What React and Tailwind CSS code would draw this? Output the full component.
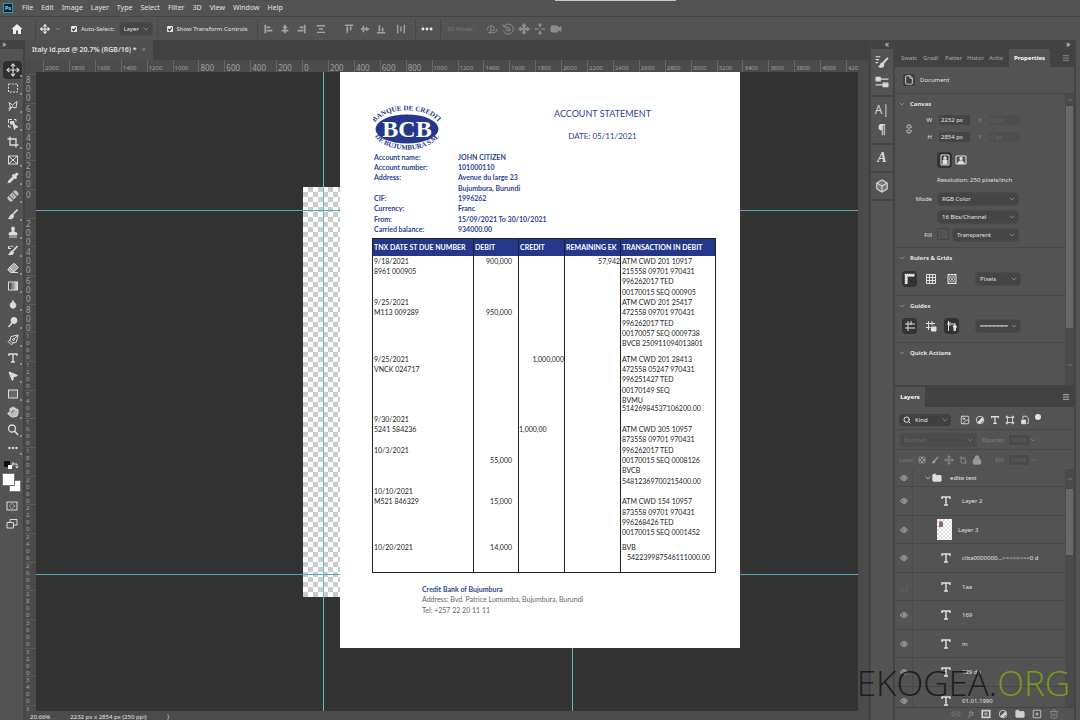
import {
  Box,
  ChevronDown,
  ChevronUp,
  Droplet,
  Ellipsis,
  Eraser,
  Eye,
  File,
  Folder,
  Hand,
  Image,
  Link2,
  Lock,
  Menu,
  MousePointer2,
  Move,
  PenTool,
  Pipette,
  Search,
  Stamp,
  Trash2,
  Video,
} from "lucide-react";

const menus = ["File", "Edit", "Image", "Layer", "Type", "Select", "Filter", "3D", "View", "Window", "Help"];

// 24x24 drawings that the icon package does not have
const shapes = {
  home: <path d="M12 2L1 12h3v10h6v-7h4v7h6V12h3z" fill="currentColor" strokeWidth="0" />,
  marquee: <rect x="3" y="4" width="18" height="16" strokeDasharray="4 2.5" />,
  lasso: <path d="M4 5l7 5 9-7-2 13-7-2-5 4c-3 1-3-3 0-3l5-1M4 5l3 10M7 18l-3 4" />,
  objectSelect: (
    <>
      <path d="M3 10V3h7M14 3h4v4M3 14v4h5" />
      <path d="M7 7h7v5H7z" fill="currentColor" />
      <path d="M12 11l10 7-5 1-2 4z" fill="currentColor" />
    </>
  ),
  crop: <path d="M6 1v17h17M1 6h17v17" strokeWidth="2.6" />,
  frame: <path d="M3 4h18v16H3zM3 4l18 16M21 4L3 20" />,
  healing: (
    <g transform="rotate(-45 12 12)">
      <rect x="0" y="6" width="24" height="12" rx="4" fill="#c4c4c4" strokeWidth="0" />
      <path d="M7 6v12M17 6v12M11 10h2M11 14h2" stroke="#555555" />
    </g>
  ),
  historyBrush: (
    <>
      <path d="M21 4L11 15" strokeWidth="3.4" />
      <path d="M10 14c-3 0-3 4-7 7 6 1 10 0 10-4z" fill="currentColor" />
      <path d="M3 9c1-5 7-6 10-3M3 4v5h5" />
    </>
  ),
  gradient: (
    <>
      <defs>
        <linearGradient id="toolGradient">
          <stop offset="0" stopColor="#333333" />
          <stop offset="1" stopColor="#e6e6e6" />
        </linearGradient>
      </defs>
      <rect x="3" y="4" width="18" height="16" fill="url(#toolGradient)" />
    </>
  ),
  dodge: (
    <>
      <circle cx="14" cy="9" r="6" fill="currentColor" />
      <path d="M10 14l-7 8" strokeWidth="3" />
    </>
  ),
  type: <path d="M4 8V4h16v4M12 4v16M8 20h8" strokeWidth="2.8" />,
  rect: <rect x="3" y="4" width="18" height="16" fill="#696969" />,
  zoomTool: (
    <>
      <circle cx="10" cy="9" r="7" strokeWidth="2.6" />
      <path d="M15 14l7 8" strokeWidth="3.4" />
    </>
  ),
  quickMask: (
    <>
      <rect x="2" y="4" width="20" height="16" />
      <circle cx="12" cy="12" r="4.5" strokeDasharray="2 2" />
    </>
  ),
  screenMode: (
    <>
      <path d="M8 3h14v11H8z" />
      <path d="M2 9h13v11H2z" fill="#535353" />
    </>
  ),
  alignLeft: <path d="M3 2v20M6 8h9M6 16h14" strokeWidth="4" />,
  alignCenter: <path d="M12 2v20M7 8h10M4 16h16" strokeWidth="4" />,
  alignRight: <path d="M21 2v20M9 8h9M4 16h14" strokeWidth="4" />,
  distribute: <path d="M2 4h20M7 12h10M2 20h20" strokeWidth="3.4" />,
  alignTop: <path d="M2 3h20M8 6v15M16 6v9" strokeWidth="4" />,
  alignMiddle: <path d="M2 12h20M8 4v16M16 7v10" strokeWidth="4" />,
  alignBottom: <path d="M2 21h20M8 3v15M16 9v9" strokeWidth="4" />,
  distributeH: <path d="M4 2v20M12 6v12M20 2v20" strokeWidth="3.4" />,
  orbit: (
    <>
      <path d="M3 14c-3-5 6-10 12-7M21 12c3 6-6 9-12 6M9 15v6l-6-3" />
      <circle cx="13" cy="11" r="4" />
    </>
  ),
  roll: (
    <>
      <path d="M4 7a10 10 0 1 1-1 8M2 3l2 5 5-1" />
      <circle cx="12" cy="12" r="4" />
      <path d="M12 12l5 4" />
    </>
  ),
  pan: <path d="M12 1l4 5h-3v5h5V8l5 4-5 4v-3h-5v5h3l-4 5-4-5h3v-5H6v3l-5-4 5-4v3h5V6H8z" fill="currentColor" />,
  slide: <path d="M12 2v7M12 15v7M2 12h7M15 12h7M9 5l3-3 3 3M9 19l3 3 3-3" strokeWidth="3" />,
  brushes: (
    <>
      <path d="M22 5L13 15" strokeWidth="3.4" />
      <path d="M12 14c-3 0-2 4-5 6 5 2 8 0 8-3z" fill="currentColor" />
      <path d="M1 3h8M1 8h6M1 13h4" />
    </>
  ),
  sliders: (
    <>
      <path d="M1 7h22M1 17h22" />
      <path d="M2 4h7v6H2zM14 14h8v6h-8z" fill="currentColor" />
    </>
  ),
  ruler: <path d="M4 22V4h18M4 5h17M5 4v17" strokeWidth="5" strokeDasharray="3 1" />,
  grid: <path d="M3 3h18v18H3zM9 3v18M15 3v18M3 9h18M3 15h18" />,
  pixelGrid: (
    <>
      <path d="M4 3h16v18H4z" />
      <path d="M4 3l16 18M20 3L4 21M12 5l6 7-6 7-6-7z" strokeWidth="1.400" />
    </>
  ),
  guides: <path d="M8 2v20M2 8h20M2 16h20M14 2v8" />,
  guidesLock: (
    <>
      <path d="M7 2v18M2 7h18M2 15h9M14 2v9" />
      <path d="M13 14h9v8h-9z" fill="currentColor" />
    </>
  ),
  guidesSmart: (
    <>
      <path d="M5 2v20M2 8h18M9 4L5 8l4 4" />
      <path d="M17 9l5 5h-3v7h-3v-7h-2z" fill="currentColor" />
    </>
  ),
  portrait: (
    <>
      <path d="M4 2h16v20H4z" />
      <circle cx="12" cy="8" r="2.5" fill="currentColor" />
      <path d="M8 12h8v8H8z" fill="currentColor" />
    </>
  ),
  landscape: (
    <>
      <path d="M2 4h20v16H2z" />
      <circle cx="12" cy="9" r="2.5" fill="currentColor" />
      <path d="M6 19c0-7 12-7 12 0z" fill="currentColor" />
    </>
  ),
  adjust: (
    <>
      <circle cx="12" cy="12" r="9" />
      <path d="M18 6A9 9 0 0 1 6 18z" fill="currentColor" />
    </>
  ),
  shape: <path d="M6 6h12v12H6zM3 3h4v4H3zM17 3h4v4h-4zM3 17h4v4H3zM17 17h4v4h-4z" />,
  smart: (
    <>
      <path d="M7 9V3h9l4 4v13h-4" />
      <path d="M4 12h9v9H4z" fill="currentColor" />
    </>
  ),
  checker: (
    <>
      <path d="M3 3h18v18H3z" />
      <path d="M9 3h6v6H9zM3 9h6v6H3zM15 9h6v6h-6zM9 15h6v6H9z" fill="currentColor" strokeWidth="0" />
    </>
  ),
  brush: (
    <>
      <path d="M21 3L11 14" strokeWidth="3.4" />
      <path d="M10 13c-4 0-3 5-7 8 6 1 10 0 10-5z" fill="currentColor" />
    </>
  ),
  artboard: <path d="M6 1v20h16M1 6h14l5 5v13M12 10l8-7" />,
  mask: (
    <>
      <path d="M3 4h18v16H3z" strokeWidth="4" />
      <circle cx="12" cy="12" r="3" />
    </>
  ),
  plus: <path d="M3 3h18v18H3zM12 8v8M8 12h8" />,
};

function Icon({ name, className = "size-3" }) {
  return (
    <svg viewBox="0 0 24 24" fill="none" stroke="currentColor" strokeWidth="2" className={className} aria-hidden="true">
      {shapes[name]}
    </svg>
  );
}

const tools = [
  ["Move", <Move className="size-3.5" />],
  ["Marquee", <Icon name="marquee" />],
  ["Lasso", <Icon name="lasso" />],
  ["Object select", <Icon name="objectSelect" />],
  ["Crop", <Icon name="crop" />],
  ["Frame", <Icon name="frame" />],
  ["Eyedropper", <Pipette className="size-3" fill="currentColor" />],
  ["Healing", <Icon name="healing" />],
  ["Brush", <Icon name="brush" />],
  ["Stamp", <Stamp className="size-3" fill="currentColor" />],
  ["History brush", <Icon name="historyBrush" />],
  ["Eraser", <Eraser className="size-3" fill="#aaaaaa" />],
  ["Gradient", <Icon name="gradient" />],
  ["Blur", <Droplet className="size-2.5" fill="currentColor" />],
  ["Dodge", <Icon name="dodge" />],
  ["Pen", <PenTool className="size-3 -scale-x-100" />],
  ["Type", <Icon name="type" />],
  ["Path select", <MousePointer2 className="size-3" fill="currentColor" />],
  ["Rectangle", <Icon name="rect" />],
  ["Hand", <Hand className="size-3" fill="#bbbbbb" />],
  ["Zoom", <Icon name="zoomTool" />],
  ["More tools", <Ellipsis className="size-3" fill="currentColor" strokeWidth={3} />],
];

const topRuler = Array.from({ length: 32 }, (_, i) => Math.abs(i * 200 - 2000));
const sideRuler = Array.from({ length: 23 }, (_, i) => Math.abs(i * 200 - 800));

const details = [
  ["Account name:", "JOHN CITIZEN"],
  ["Account number:", "101000110"],
  ["Address:", "Avenue du large 23"],
  ["", "Bujumbura, Burundi"],
  ["CIF:", "1996262"],
  ["Currency:", "Franc"],
  ["From:", "15/09/2021 To 30/10/2021"],
  ["Carried balance:", "934000.00"],
];

// number, debit, credit, remaining, text, row height
const lines = [
  ["9/18/2021", "900,000", "", "57,942", "ATM CWD 201 10917"],
  ["8961 000905", "", "", "", "215558 09701 970431"],
  ["", "", "", "", "996262017 TED"],
  ["", "", "", "", "00170015 SEQ 000905"],
  ["9/25/2021", "", "", "", "ATM CWD 201 25417"],
  ["M113 009289", "950,000", "", "", "472558 09701 970431"],
  ["", "", "", "", "996262017 TED"],
  ["", "", "", "", "00170057 SEQ 0009738"],
  ["", "", "", "", "BVCB 250911094013801", "h-[16px]"],
  ["9/25/2021", "", "1,000,000", "", "ATM CWD 201 28413"],
  ["VNCK 024717", "", "", "", "472558 05247 970431"],
  ["", "", "", "", "996251427 TED"],
  ["", "", "", "", "00170149 SEQ"],
  ["", "", "", "", "BVMU", "h-[8px]"],
  ["", "", "", "", "51426984537106200.00"],
  ["9/30/2021", "", "", "", ""],
  ["5241 584236", "", "1,000,00", "", "ATM CWD 305 10957"],
  ["", "", "", "", "873558 09701 970431"],
  ["10/3/2021", "", "", "", "996262017 TED"],
  ["", "55,000", "", "", "00170015 SEQ 0008126"],
  ["", "", "", "", "BVCB"],
  ["", "", "", "", "54812369700215400.00"],
  ["10/10/2021", "", "", "", ""],
  ["M521 846329", "15,000", "", "", "ATM CWD 154 10957"],
  ["", "", "", "", "873558 09701 970431"],
  ["", "", "", "", "996268426 TED"],
  ["", "", "", "", "00170015 SEQ 0001452", "h-[15px]"],
  ["10/20/2021", "14,000", "", "", "BVB"],
  ["", "", "", "", "542239987546111000.00", "h-[21px]"],
];

const layers = [
  { name: "Layer 2", visible: true },
  { name: "Layer 3", visible: true, thumb: true },
  { name: "ciita0000000...<<<<<<<<0 d", visible: true },
  { name: "1aa", visible: false },
  { name: "169", visible: true },
  { name: "m", visible: true },
  { name: "129 da", visible: true },
  { name: "01.01.1990", visible: true },
];

function Divider() {
  return <span className="h-5 w-px bg-[#464646]" />;
}

function Select({ label, value, className = "", dim }) {
  return (
    <span className={`relative flex items-center rounded-sm border border-[#4a4a4a] bg-[#454545] ${dim ? "opacity-50" : ""} ${className}`}>
      <select aria-label={label} className="w-full appearance-none bg-transparent pl-1 leading-3 outline-none">
        <option>{value}</option>
      </select>
      <ChevronDown className="pointer-events-none absolute right-0.5 size-2 text-[#a0a0a0]" />
    </span>
  );
}

function Check({ label }) {
  return (
    <label className="flex items-center gap-1">
      <span className="relative flex size-1.5">
        <input type="checkbox" defaultChecked className="size-1.5 appearance-none rounded-[1px] bg-[#e8e8e8]" />
        <svg viewBox="0 0 8 8" className="pointer-events-none absolute inset-0 size-1.5" fill="none" stroke="#333333" strokeWidth="1.6">
          <path d="M1.5 4l2 2 3-4" />
        </svg>
      </span>
      {label}
    </label>
  );
}

function MenuBar() {
  return (
    <header className="relative flex h-[17px] shrink-0 items-center border-b border-[#444444] pl-[3px] text-[7px]">
      <span className="flex size-[10px] items-center justify-center border border-[#2e9c9c] bg-[#0b1e33] text-[6px] font-bold leading-none text-[#7fd0ee]">
        Ps
      </span>
      <nav className="flex gap-2 pl-[9px]">
        {menus.map((m) => (
          <button key={m}>{m}</button>
        ))}
      </nav>
      <span className="absolute left-[555px] top-0 h-px w-[121px] bg-[#c6cbc8]" />
    </header>
  );
}

function OptionsBar() {
  return (
    <div className="flex h-[23px] shrink-0 items-center gap-1 pl-[11px]">
      <button aria-label="Home" className="text-[#eeeeee]"><Icon name="home" /></button>
      <span className="w-1" />
      <Divider />
      <Move className="size-2.5" strokeWidth={3} />
      <ChevronDown className="size-2 text-[#9a9a9a]" />
      <span className="w-px" />
      <Check label="Auto-Select:" />
      <Select label="Auto-select target" value="Layer" className="w-[34px]" />
      <Divider />
      <span className="w-px" />
      <Check label="Show Transform Controls" />
      <span className="w-px" />
      <Divider />
      <div className="flex items-center gap-1.5 pl-0.5 text-[#a3a3a3]">
        <Icon name="alignLeft" className="size-2.5" />
        <Icon name="alignCenter" className="size-2.5" />
        <Icon name="alignRight" className="size-2.5" />
        <Icon name="distribute" className="ml-1 mr-3 size-2.5" />
        <Icon name="alignTop" className="size-2.5" />
        <Icon name="alignMiddle" className="size-2.5" />
        <Icon name="alignBottom" className="size-2.5" />
        <Icon name="distributeH" className="ml-1 size-2.5" />
      </div>
      <span className="w-px" />
      <Divider />
      <button aria-label="More options" className="mr-0.5 text-[#eeeeee]">
        <Ellipsis className="size-3.5" fill="currentColor" strokeWidth={3} />
      </button>
      <Divider />
      <span className="pl-0.5 text-[#7b7b7b]">3D Mode:</span>
      <div className="flex gap-1 pl-2 text-[#8c8c8c]">
        <Icon name="orbit" />
        <Icon name="roll" />
        <Icon name="pan" />
        <Icon name="slide" />
        <Video className="size-3" fill="currentColor" />
      </div>
    </div>
  );
}

function Toolbar() {
  return (
    <aside className="flex w-[25px] shrink-0 flex-col border-r-2 border-[#444444] text-[#dcdcdc]">
      <div className="h-[9px] bg-[#424242] pl-0.5 text-[8px] leading-[7px]">»</div>
      <div className="mt-3 flex flex-col">
        {tools.map(([name, icon], i) => (
          <button
            key={name}
            aria-label={name}
            className={`relative ml-[3px] flex h-[18px] w-[19px] items-center justify-center ${i === 0 ? "rounded-sm bg-[#2f2f2f]" : ""}`}
          >
            {icon}
            <span className="absolute bottom-0.5 right-0 size-0.5 bg-[#8e8e8e]" />
          </button>
        ))}
      </div>
      <div className="mt-1 flex justify-between px-1">
        <span className="relative size-1.5 bg-[#111111]">
          <span className="absolute left-1 top-1 size-1 bg-white" />
        </span>
        <svg viewBox="0 0 8 8" className="size-2" fill="none" stroke="currentColor">
          <path d="M1 3h5v4M2.5 1L1 3l1.500 2M4.500 5.500L6 7l1.500-1.500" />
        </svg>
      </div>
      <div className="relative mt-1 h-6">
        <span className="absolute left-[9px] top-[7px] size-[12px] border border-[#777777] bg-white" />
        <span className="absolute left-[2px] top-0 size-[13px] border border-[#777777] bg-white" />
      </div>
      <button aria-label="Quick mask" className="mx-auto flex h-[18px] items-center"><Icon name="quickMask" /></button>
      <button aria-label="Screen mode" className="mx-auto flex h-[18px] items-center"><Icon name="screenMode" /></button>
    </aside>
  );
}

function BankLogo() {
  return (
    <svg viewBox="0 0 68 48" className="ml-px h-[48px] w-[68px]" fill="#24378a" fontFamily="Liberation Serif, serif" fontWeight="bold">
      <path id="arcTop" d="M2 18C13 1 55 1 66 18" fill="none" />
      <path id="arcBottom" d="M1 30C12 49.500 56 49.500 67 30" fill="none" />
      <ellipse cx="34" cy="24" rx="31.500" ry="14.500" />
      <text fontSize="7" textAnchor="middle">
        <textPath href="#arcTop" startOffset="50%">BANQUE DE CREDIT</textPath>
      </text>
      <text fontSize="7" textAnchor="middle">
        <textPath href="#arcBottom" startOffset="50%">DE BUJUMBURA S.M.</textPath>
      </text>
      <text x="34" y="32" fontSize="24" textAnchor="middle" fill="#ffffff">BCB</text>
    </svg>
  );
}

function Statement() {
  return (
    <article className="absolute left-[304px] top-0 flex w-[400px] flex-col bg-white pb-[33px] pl-[32px] pr-[24px] pt-[33px] font-['Lato',sans-serif] text-[7px] leading-[10px] text-[#222222]">
      <div className="flex items-start justify-between text-[#2b3f92]">
        <BankLogo />
        <div className="mr-[65px] pt-px text-center">
          <h1 className="text-[9px] leading-4">ACCOUNT STATEMENT</h1>
          <p className="mt-1.5 text-[8px] leading-4">DATE: 05/11/2021</p>
        </div>
      </div>
      <dl className="-mt-px pl-0.5 font-bold text-[#2b3f92]">
        {details.map(([k, v]) => (
          <div key={v} className="flex h-[10px] nth-[3n]:h-[11px]">
            <dt className="w-[84px]">{k}</dt>
            <dd>{v}</dd>
          </div>
        ))}
      </dl>
      <table className="mt-1 w-full table-fixed border-collapse border border-[#222222]">
        <colgroup>
          <col className="w-[101px]" />
          <col className="w-[45px]" />
          <col className="w-[46px]" />
          <col className="w-[56px]" />
          <col />
        </colgroup>
        <thead>
          <tr className="h-[17px] whitespace-nowrap bg-[#24378a] text-left text-white">
            {["TNX DATE ST DUE NUMBER", "DEBIT", "CREDIT", "REMAINING EK", "TRANSACTION IN DEBIT"].map((h) => (
              <th key={h} className="border-x border-[#222222] p-0 pl-px">{h}</th>
            ))}
          </tr>
        </thead>
        <tbody>
          {lines.map(([no, debit, credit, rest, text, height], i) => (
            <tr key={i} className={`whitespace-nowrap align-top ${height || "h-[10px] nth-[3n]:h-[11px]"}`}>
              <td className="border-x border-[#222222] p-0 pl-px">{no}</td>
              <td className="border-x border-[#222222] p-0 pr-[6px] text-right">{debit}</td>
              <td className={`border-x border-[#222222] p-0 ${credit === "1,000,00" ? "" : "text-right"}`}>{credit}</td>
              <td className="border-x border-[#222222] p-0 text-right">{rest}</td>
              <td className={`border-x border-[#222222] p-0 ${i === lines.length - 1 ? "pl-[6px]" : "pl-px"}`}>
                <div className="h-0">{text}</div>
              </td>
            </tr>
          ))}
        </tbody>
      </table>
      <footer className="mt-[11px] pl-[50px] text-[#666666]">
        <p className="font-bold text-[#2b4a85]">Credit Bank of Bujumbura</p>
        <p className="leading-[11px]">Address: Bvd. Patrice Lumumba, Bujumbura, Burundi</p>
        <p>Tel: +257 22 20 11 11</p>
      </footer>
    </article>
  );
}

function DocumentArea() {
  return (
    <main className="flex min-w-0 flex-1 flex-col bg-[#4b4b4b]">
      <div className="flex h-5 shrink-0 bg-[#424242] text-[7px]">
        <button className="flex items-center gap-[5px] bg-[#4f4f4f] px-[7px] font-semibold text-[#e0e0e0]">
          Italy id.psd @ 20.7% (RGB/16) * <span className="text-[#888888]">×</span>
        </button>
      </div>
      <div className="mr-[10px] h-3 overflow-hidden pl-[18px] text-[#a0a0a0]">
        <div className="-mr-[14px] flex h-full items-end">
          {topRuler.map((n, i) => (
            <span
              key={i}
              className={`flex h-full flex-1 basis-0 items-center border-l border-[#666666] pl-px pt-1 leading-none ${n > 999 ? "text-[6px]" : "text-[8px]"}`}
            >
              {n}
            </span>
          ))}
        </div>
      </div>
      <div className="flex min-h-0 flex-1">
        <div className="w-[11px] shrink-0 overflow-hidden text-[#a0a0a0]">
          <div className="flex flex-col pt-[2px]">
            {sideRuler.map((n, i) => (
              <span
                key={i}
                className={`flex h-[29px] shrink-0 flex-col items-start border-t border-[#5a5a5a] pl-px nth-[3n]:h-[28px] ${n > 999 ? "text-[6px] leading-[7px]" : "text-[8px] leading-[9px]"}`}
              >
                {String(n).split("").map((c, j) => (
                  <span key={j}>{c}</span>
                ))}
              </span>
            ))}
          </div>
        </div>
        <div className="relative mr-[10px] min-w-0 flex-1 overflow-hidden bg-[#333333]">
          <div className="absolute left-[267px] top-[115px] h-[410px] w-[320px] bg-white bg-[conic-gradient(#cccccc_25%,#ffffff_0_50%,#cccccc_0_75%,#ffffff_0)] bg-size-[10px_10px]" />
          <span className="absolute inset-x-0 top-[138px] h-px bg-[#4fb0b3]" />
          <span className="absolute inset-x-0 top-[502px] h-px bg-[#4fb0b3]" />
          <span className="absolute inset-y-0 left-[287px] w-px bg-[#5cc4c0]" />
          <span className="absolute inset-y-0 left-[536px] w-px bg-[#5cc4c0]" />
          <Statement />
        </div>
      </div>
      <div className="flex h-[9px] shrink-0 items-start gap-5 overflow-hidden pl-[5px] leading-[12px]">
        <span>20.66%</span>
        <span>2232 px x 2854 px (250 ppi)</span>
        <span>⟩</span>
      </div>
    </main>
  );
}

function Dock() {
  return (
    <aside className="flex w-[26px] shrink-0 flex-col border-x-2 border-[#444444] text-[#d8d8d8]">
      <div className="h-[9px] bg-[#424242] pr-1 text-right text-[8px] leading-[7px]">«</div>
      <div className="flex h-12 flex-col items-center justify-evenly border-b-2 border-[#444444]">
        <button aria-label="Brushes"><Icon name="brushes" className="size-3.5" /></button>
        <button aria-label="Brush settings"><Icon name="sliders" className="size-3.5" /></button>
      </div>
      <div className="flex h-12 flex-col items-center justify-evenly border-b-2 border-[#444444] text-[12px] leading-4">
        <button aria-label="Character">A|</button>
        <button aria-label="Paragraph" className="font-bold">¶</button>
      </div>
      <div className="flex h-7 items-center justify-center border-b-2 border-[#444444]">
        <button aria-label="Glyphs" className="font-['Liberation_Serif',serif] text-[14px] font-bold italic">A</button>
      </div>
      <div className="flex h-7 items-center justify-center border-b-2 border-[#444444]">
        <button aria-label="3D"><Box className="size-3.5" fill="#777777" /></button>
      </div>
    </aside>
  );
}

function Field({ label, value, dim }) {
  return (
    <label className={`flex items-center gap-[7px] ${dim ? "text-[#8a8a8a]" : ""}`}>
      <span className="w-2 text-right">{label}</span>
      <input
        defaultValue={value}
        className={`h-[10px] w-[31px] pl-0.5 outline-none ${dim ? "bg-[#4e4e4e] text-[#666666]" : "bg-[#454545]"}`}
      />
    </label>
  );
}

function SectionTitle({ children }) {
  return (
    <h2 className="flex h-5 items-center gap-[4px] pl-[3px] font-bold">
      <ChevronDown className="size-2 text-[#a0a0a0]" /> {children}
    </h2>
  );
}

function IconButton({ name, label, active }) {
  return (
    <button aria-label={label} className={`flex h-4 w-[15px] items-center justify-center rounded-sm ${active ? "bg-[#333333]" : ""}`}>
      <Icon name={name} />
    </button>
  );
}

function Properties() {
  return (
    <section className="flex h-[336px] shrink-0 flex-col">
      <div className="flex h-[18px] shrink-0 items-center bg-[#424242] text-[#a8a8a8]">
        <div className="flex h-full min-w-0 items-center gap-[4px] pl-[6px]">
          {["Swatc", "Gradi", "Patter", "Histor", "Actio"].map((t) => (
            <button key={t} className="w-[18px] whitespace-nowrap text-left">{t}</button>
          ))}
        </div>
        <button className="ml-[2px] h-full bg-[#535353] px-[5px] font-bold text-white">Properties</button>
        <Menu className="ml-auto mr-1 size-2" />
      </div>
      <div className="flex h-[27px] shrink-0 items-center gap-[5px] border-b border-[#474747] pl-2">
        <span className="flex size-3 items-center justify-center bg-[#404040]"><File className="size-2.5" /></span>
        Document
      </div>
      <div className="flex min-h-0 flex-1">
        <div className="flex-1">
          <SectionTitle>Canvas</SectionTitle>
          <div className="flex items-center pt-px">
            <Link2 className="ml-[9px] size-2.5 rotate-90" />
            <div className="ml-[10px] grid grid-cols-2 gap-x-1 gap-y-[7px]">
              <Field label="W" value="2232 px" />
              <Field label="X" value="0 px" dim />
              <Field label="H" value="2854 px" />
              <Field label="Y" value="0 px" dim />
            </div>
          </div>
          <div className="flex gap-px pl-[42px] pt-[10px]">
            <IconButton name="portrait" label="Portrait" active />
            <IconButton name="landscape" label="Landscape" />
          </div>
          <p className="py-[6px] pl-[42px] leading-3">Resolution: 250 pixels/inch</p>
          <div className="grid grid-cols-[37px_82px] items-center gap-x-[5px] gap-y-[4px]">
            <span className="text-right">Mode</span>
            <Select label="Mode" value="RGB Color" />
            <Select label="Bit depth" value="16 Bits/Channel" className="col-start-2" />
            <span className="text-right">Fill</span>
            <div className="flex gap-[3px]">
              <button aria-label="Fill colour" className="h-3 w-[12px] border border-[#454545]" />
              <Select label="Fill" value="Transparent" className="flex-1" />
            </div>
          </div>
          <div className="mt-[5px] border-t border-[#474747]">
            <SectionTitle>Rulers &amp; Grids</SectionTitle>
            <div className="flex items-center gap-[6px] pb-2 pl-[7px] pt-[3px]">
              <IconButton name="ruler" label="Rulers" active />
              <IconButton name="grid" label="Grid" />
              <IconButton name="pixelGrid" label="Pixel grid" />
              <Select label="Units" value="Pixels" className="ml-[10px] w-[46px]" />
            </div>
          </div>
          <div className="border-t border-[#474747]">
            <SectionTitle>Guides</SectionTitle>
            <div className="flex items-center gap-[6px] pb-2 pl-[7px] pt-[2px]">
              <IconButton name="guides" label="Guides" active />
              <IconButton name="guidesLock" label="Lock guides" />
              <IconButton name="guidesSmart" label="Smart guides" active />
              <Select label="Guide style" value="━━━━━━━" className="ml-[10px] w-[46px]" />
            </div>
          </div>
          <div className="border-t border-[#474747]">
            <SectionTitle>Quick Actions</SectionTitle>
          </div>
        </div>
        <div className="flex w-[9px] flex-col items-center bg-[#4a4a4a] text-[#888888]">
          <ChevronUp className="my-0.5 size-2" />
          <div className="h-[222px] w-[7px] bg-[#696969]" />
          <ChevronDown className="mb-4 mt-auto size-2" />
        </div>
      </div>
    </section>
  );
}

function Layers() {
  return (
    <section className="flex min-h-0 flex-1 flex-col border-t-2 border-[#444444]">
      <div className="flex h-5 shrink-0 items-center bg-[#424242]">
        <button className="h-full w-[30px] bg-[#535353] font-bold text-white">Layers</button>
        <Menu className="ml-auto mr-1 size-2" />
      </div>
      <div className="flex h-[23px] shrink-0 items-center gap-[5px] border-b border-[#474747] pl-1 pt-1">
        <div className="mr-1 flex w-[52px] items-center rounded-sm bg-[#404040] pl-1">
          <Search className="size-2 shrink-0" strokeWidth={3} />
          <Select label="Filter kind" value="Kind" className="flex-1 border-0 bg-transparent" />
        </div>
        <Image className="size-2.5" />
        <Icon name="adjust" className="size-2.5" />
        <Icon name="type" className="size-2.5" />
        <Icon name="shape" className="size-2.5" />
        <Icon name="smart" className="size-2.5" />
        <span className="mb-1.5 size-1.5 rounded-full bg-[#e4e4e4]" />
      </div>
      <div className="flex h-5 shrink-0 items-center border-b border-[#474747] pl-1 text-[#808080]">
        <Select label="Blend mode" value="Normal" className="w-[78px]" dim />
        <label className="ml-[5px] flex items-center gap-1">
          Opacity:
          <input defaultValue="100%" className="w-[20px] bg-[#494949] pl-0.5 text-[#686868] outline-none" />
        </label>
        <ChevronDown className="size-2" />
      </div>
      <div className="flex h-[19px] shrink-0 items-center gap-[5px] pl-1 text-[#9a9a9a]">
        <span className="text-[#808080]">Lock:</span>
        <Icon name="checker" className="size-2" />
        <Icon name="brush" className="size-2" />
        <Move className="size-2.5" />
        <Icon name="artboard" className="size-2" />
        <Lock className="size-2.5" fill="currentColor" />
        <label className="ml-[8px] flex items-center gap-1 text-[#808080]">
          Fill:
          <input defaultValue="100%" className="w-[20px] bg-[#494949] pl-0.5 text-[#686868] outline-none" />
        </label>
        <ChevronDown className="-ml-1 size-2 text-[#707070]" />
      </div>
      <div className="flex min-h-0 flex-1 overflow-hidden">
        <ul className="min-w-0 flex-1">
          <li className="flex h-[18px] items-center border-b border-[#484848]">
            <span className="flex h-full w-[18px] items-center justify-center border-r border-[#4a4a4a]"><Eye className="size-2 text-[#b0b0b0]" strokeWidth={3} /></span>
            <ChevronDown className="ml-[11px] size-2" />
            <Folder className="size-2.5 text-[#e0e0e0]" fill="currentColor" />
            <span className="ml-[8px]">edite text</span>
          </li>
          {layers.map((l) => (
            <li key={l.name} className="flex h-[28px] items-center border-b border-[#484848] even:h-[29px]">
              <button aria-label={`Toggle ${l.name}`} className="flex h-full w-[18px] shrink-0 items-center justify-center border-r border-[#4a4a4a]">
                {l.visible ? <Eye className="size-2 text-[#b0b0b0]" strokeWidth={3} /> : <span className="size-2 border-b border-r border-[#5f5f5f]" />}
              </button>
              {l.thumb ? (
                <span className="ml-[24px] mr-[6px] flex h-[21px] w-[15px] bg-[conic-gradient(#dddddd_25%,#ffffff_0_50%,#dddddd_0_75%,#ffffff_0)] bg-size-[4px_4px]">
                  <span className="ml-0.5 mt-0.5 h-1.5 w-1 rounded-t-full bg-[#8a6f66]" />
                </span>
              ) : (
                <Icon name="type" className="ml-[27px] mr-[10px] size-3" />
              )}
              <span className="whitespace-nowrap">{l.name}</span>
            </li>
          ))}
        </ul>
        <div className="flex w-[9px] flex-col items-center bg-[#4a4a4a] text-[#888888]">
          <ChevronUp className="my-1.5 size-2" />
          <div className="h-[66px] w-[7px] bg-[#696969]" />
        </div>
      </div>
      <div className="flex h-[13px] shrink-0 items-center justify-end gap-[7px] border-t border-[#444444] pr-[15px] text-[#d0d0d0]">
        <Link2 className="size-2.5 text-[#7d7d7d]" />
        <span className="text-[7px] italic text-[#9c9c9c]">fx</span>
        <Icon name="mask" className="size-2.5" />
        <Icon name="adjust" className="size-2.5" />
        <Folder className="size-2.5" fill="currentColor" />
        <Icon name="plus" className="size-2.5" />
        <Trash2 className="size-2.5 text-[#8d8d8d]" />
      </div>
    </section>
  );
}

export default function App() {
  return (
    <div className="relative flex h-screen flex-col overflow-hidden bg-[#535353] font-['Noto_Sans',sans-serif] text-[6px] leading-[10px] text-[#e2e2e2]">
      <MenuBar />
      <OptionsBar />
      <div className="flex min-h-0 flex-1">
        <Toolbar />
        <DocumentArea />
        <div className="w-px bg-[#444444]" />
        <Dock />
        <div className="flex w-[179px] shrink-0 flex-col">
          <div className="h-[9px] shrink-0 bg-[#424242] pr-1 text-right text-[8px] leading-[7px]">»</div>
          <Properties />
          <Layers />
        </div>
        <div className="w-[6px] shrink-0 border-l-2 border-[#444444]" />
      </div>

      {/* Site mark */}
      <p className="pointer-events-none absolute bottom-[12px] right-[10px] font-['Open_Sans',sans-serif] text-[35px] font-light leading-[50px] text-[#1d1d1d]">
        EKOGEA.<span className="text-[#7a991c]">ORG</span>
      </p>
    </div>
  );
}
